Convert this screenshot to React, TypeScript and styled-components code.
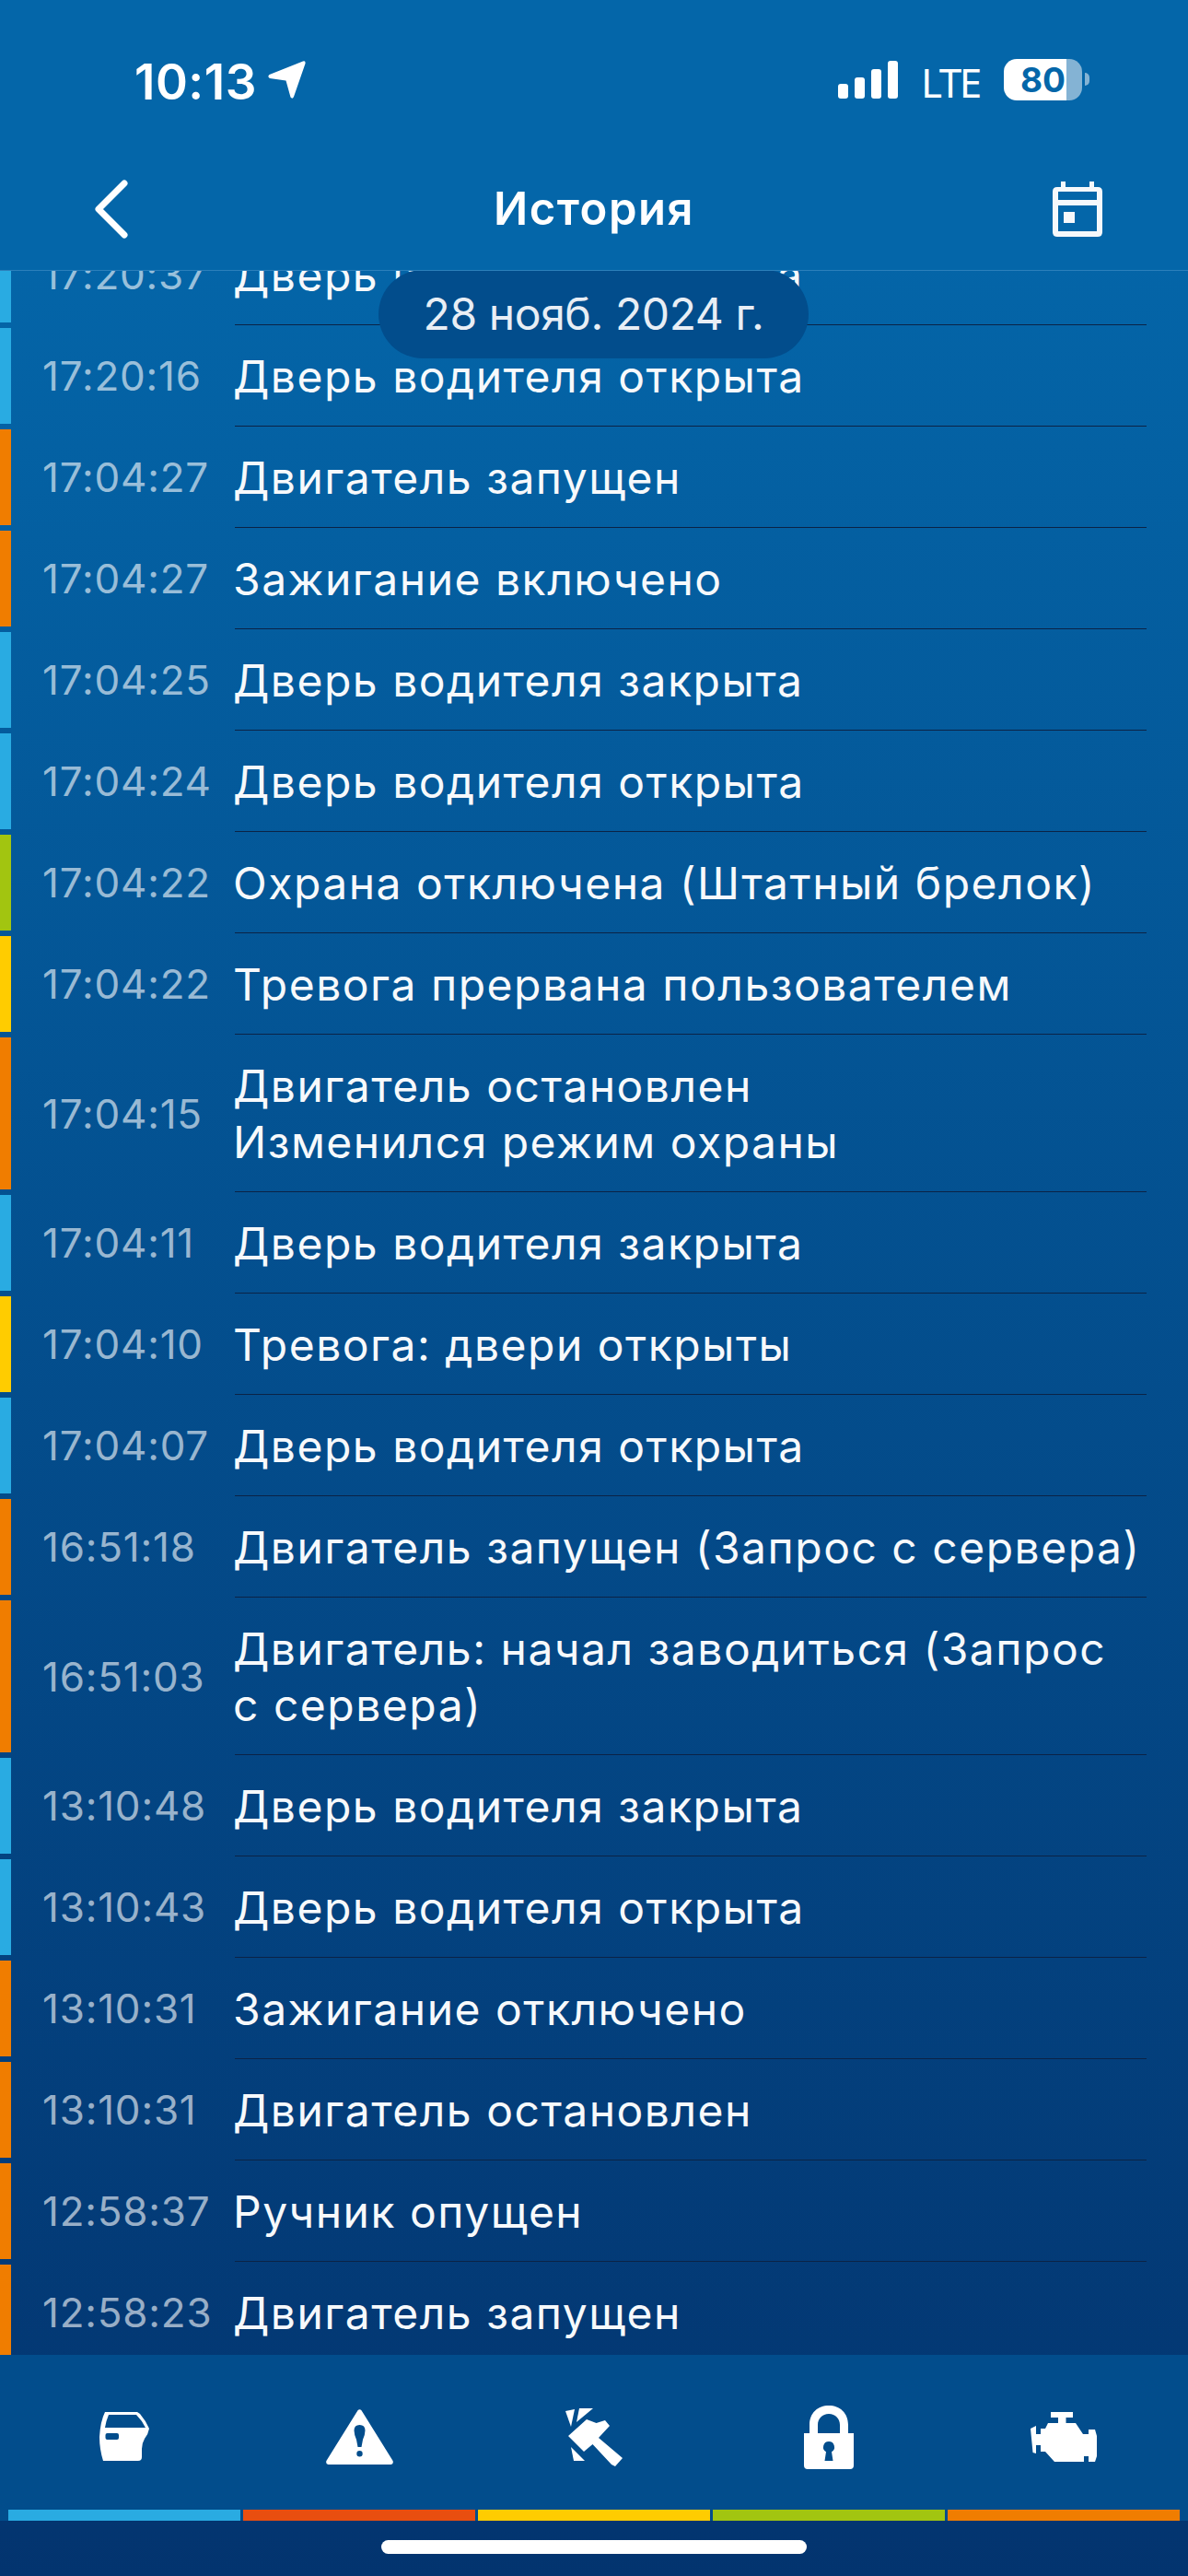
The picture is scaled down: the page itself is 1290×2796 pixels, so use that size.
import React from "react";
import styled, { createGlobalStyle } from "styled-components";

const COLORS = {
  door: "#29abe2",
  alarm: "#e94e0f",
  warn: "#ffcc00",
  guard: "#a2c510",
  engine: "#f07d00",
};

type Kind = keyof typeof COLORS;

const events: { time: string; text: string; kind: Kind }[] = [
  { time: "17:20:37", text: "Дверь водителя закрыта", kind: "door" },
  { time: "17:20:16", text: "Дверь водителя открыта", kind: "door" },
  { time: "17:04:27", text: "Двигатель запущен", kind: "engine" },
  { time: "17:04:27", text: "Зажигание включено", kind: "engine" },
  { time: "17:04:25", text: "Дверь водителя закрыта", kind: "door" },
  { time: "17:04:24", text: "Дверь водителя открыта", kind: "door" },
  { time: "17:04:22", text: "Охрана отключена (Штатный брелок)", kind: "guard" },
  { time: "17:04:22", text: "Тревога прервана пользователем", kind: "warn" },
  { time: "17:04:15", text: "Двигатель остановлен\nИзменился режим охраны", kind: "engine" },
  { time: "17:04:11", text: "Дверь водителя закрыта", kind: "door" },
  { time: "17:04:10", text: "Тревога: двери открыты", kind: "warn" },
  { time: "17:04:07", text: "Дверь водителя открыта", kind: "door" },
  { time: "16:51:18", text: "Двигатель запущен (Запрос с сервера)", kind: "engine" },
  { time: "16:51:03", text: "Двигатель: начал заводиться (Запрос\nс сервера)", kind: "engine" },
  { time: "13:10:48", text: "Дверь водителя закрыта", kind: "door" },
  { time: "13:10:43", text: "Дверь водителя открыта", kind: "door" },
  { time: "13:10:31", text: "Зажигание отключено", kind: "engine" },
  { time: "13:10:31", text: "Двигатель остановлен", kind: "engine" },
  { time: "12:58:37", text: "Ручник опущен", kind: "engine" },
  { time: "12:58:23", text: "Двигатель запущен", kind: "engine" },
];

const tabs: { kind: Kind; icon: React.ReactNode }[] = [
  {
    kind: "door",
    icon: (
      <svg width="54" height="54" viewBox="0 0 54 54" fill="#fff">
        <path
          fillRule="evenodd"
          d="M6 0H41L44 2Q50 9 54 18Q53 24 49 29Q46 34 46 40V49Q46 53 42 53H4Q0 40 0 27Q1 10 6 0ZM10 3Q7 10 6 17H50Q46 9 40 3ZM8.5 23Q6.5 23 6.5 25V28Q6.5 30 8.5 30H19Q21 30 21 28V25Q21 23 19 23Z"
        />
      </svg>
    ),
  },
  {
    kind: "alarm",
    icon: (
      <svg width="73" height="60" viewBox="0 0 73 60" fill="#fff">
        <path
          fillRule="evenodd"
          d="M34.5 1.2Q36.5 -0.6 38.5 1.2L72.6 56Q73.6 59.5 70.5 60H2.5Q-0.6 59.5 0.4 56ZM36.5 17Q30.5 17 30.5 23Q30.5 27 33 33L34.5 41H38.5L40 33Q42.5 27 42.5 23Q42.5 17 36.5 17ZM36.5 45A3.2 3.2 0 1 0 36.5 51.4A3.2 3.2 0 1 0 36.5 45Z"
        />
      </svg>
    ),
  },
  {
    kind: "warn",
    icon: (
      <svg width="63" height="63" viewBox="0 0 63 63" fill="#fff">
        <path d="M23 12L33.5 16L43 13L48 19L36 32L62 54L54 63L50 61L29.5 39L20 47L3 30Z" />
        <path d="M0 3L10 1L6 20Z" />
        <path d="M15 0H30L12 15Z" />
        <path d="M6 42L21 57H9Z" />
      </svg>
    ),
  },
  {
    kind: "guard",
    icon: (
      <svg width="54" height="69" viewBox="0 0 54 69" fill="#fff">
        <path
          fillRule="evenodd"
          d="M0 30H6V21C6 8 15 0 27 0S48 8 48 21V30H54V65Q54 69 50 69H4Q0 69 0 65ZM15 30H39V21C39 14 34 9 27 9S15 14 15 21ZM27 39A6 6 0 0 0 24 50.2L22.5 60H31.5L30 50.2A6 6 0 0 0 27 39Z"
        />
      </svg>
    ),
  },
  {
    kind: "engine",
    icon: (
      <svg width="72" height="54" viewBox="0 0 72 54" fill="#fff">
        <path d="M22 0H46V6H38.5V12H49L57 24H63V19H70L72 26V48L70 54H63V48H58V54H26L16 43H11V36H6V45L2.5 44L0 18L6 15V24H11V18H16L19 12H30V6H22Z" />
      </svg>
    ),
  },
];

const GlobalStyle = createGlobalStyle`
  html, body {
    margin: 0;
    padding: 0;
  }
`;

const Screen = styled.div`
  width: 1290px;
  height: 2796px;
  display: flex;
  flex-direction: column;
  background: linear-gradient(180deg, #0466a9 0%, #0466a9 8%, #03346f 100%);
  font-family: Inter, "Noto Sans", sans-serif;
  color: #fff;
  overflow: hidden;
`;

const Header = styled.header`
  height: 294px;
  flex: none;
  box-sizing: border-box;
  background: #0466a9;
  border-bottom: 1px solid #2c80bb;
`;

const StatusBar = styled.div`
  height: 171px;
  display: flex;
  justify-content: space-between;
  padding: 64px 107px 0 146px;
  box-sizing: border-box;
`;

const Clock = styled.div`
  display: flex;
  gap: 12px;
  height: 44px;
  align-items: center;
  font-size: 53px;
  font-weight: 600;
  letter-spacing: 0.5px;

  span {
    position: relative;
    top: 3px;
  }
`;

const StatusRight = styled.div`
  display: flex;
  align-items: flex-start;
`;

const Network = styled.span`
  width: 61px;
  margin: 3px 29px 0 25px;
  font-size: 44px;
  line-height: 44px;
  font-family: "Noto Sans", sans-serif;
  letter-spacing: -2.5px;
  white-space: nowrap;
`;

const Battery = styled.div`
  width: 85px;
  height: 45px;
  border-radius: 14px;
  overflow: hidden;
  background: linear-gradient(90deg, #fff 0, #fff 68px, #84b3d4 68px);
  color: #0466a9;
  font-size: 37px;
  font-weight: 700;
  line-height: 45px;
  text-align: center;
`;

const BatteryNub = styled.div`
  width: 5px;
  height: 14px;
  margin: 15px 0 0 3px;
  border-radius: 0 7px 7px 0;
  background: #84b3d4;
`;

const NavBar = styled.nav`
  height: 122px;
  display: flex;
  align-items: center;
  justify-content: space-between;
  padding: 0 93px 11px 103px;
  box-sizing: border-box;
`;

const Title = styled.h1`
  margin: 0 0 0 8px;
  font-size: 49px;
  font-weight: 600;
  letter-spacing: 1.5px;
`;

const Body = styled.main`
  position: relative;
  flex: 1;
  min-height: 0;
  overflow: hidden;
`;

const List = styled.ul`
  margin: -48px 0 0;
  padding: 0;
  list-style: none;
`;

const Row = styled.li`
  display: flex;
  align-items: stretch;
`;

const Bar = styled.div<{ $kind: Kind }>`
  flex: none;
  width: 12px;
  margin-bottom: 6px;
  background: ${({ $kind }) => COLORS[$kind]};
`;

const Time = styled.time`
  flex: none;
  width: 243px;
  box-sizing: border-box;
  padding: 0 0 6px 34px;
  display: flex;
  align-items: center;
  font-size: 44px;
  color: rgba(255, 255, 255, 0.6);
  letter-spacing: 0.8px;
`;

const Message = styled.div`
  flex: none;
  width: 990px;
  box-sizing: border-box;
  margin-bottom: 3px;
  padding: 22px 0 23px;
  border-bottom: 1px solid #0b2346;
  font-size: 48px;
  line-height: 61px;
  letter-spacing: 1.5px;
  white-space: pre-line;
  color: #f7f9fb;
`;

const MessageText = styled.span`
  display: block;
  margin-left: -2px;
`;

const DatePill = styled.div`
  position: absolute;
  top: -1px;
  left: 411px;
  width: 467px;
  height: 96px;
  border-radius: 48px;
  background: #024d8c;
  display: flex;
  align-items: center;
  justify-content: center;
  padding-bottom: 2px;
  box-sizing: border-box;
  font-size: 48px;
  letter-spacing: -0.4px;
  color: #e8eef5;
`;

const TabBar = styled.footer`
  flex: none;
  height: 180px;
  box-sizing: border-box;
  padding: 0 9px;
  display: grid;
  grid-template-columns: repeat(5, 1fr);
  gap: 3px;
  background: #024d8c;
`;

const Tab = styled.div<{ $kind: Kind }>`
  display: flex;
  align-items: center;
  justify-content: center;
  padding-top: 10px;
  box-sizing: border-box;
  border-bottom: 12px solid ${({ $kind }) => COLORS[$kind]};
`;

const HomeArea = styled.div`
  flex: none;
  height: 60px;
  display: flex;
  justify-content: center;
  padding-top: 21px;
  box-sizing: border-box;
`;

const HomeIndicator = styled.div`
  width: 462px;
  height: 15px;
  border-radius: 8px;
  background: #fff;
`;

export default function App() {
  return (
    <Screen>
      <GlobalStyle />
      <Header>
        <StatusBar>
          <Clock>
            <span>10:13</span>
            <svg width="41" height="41" viewBox="0 0 41 41" fill="#fff">
              <path d="M38 0.5Q41 -0.5 40.5 3L28 39Q26.5 42 24.5 39.5L19.5 21.5L2 19Q-1 17.5 1.5 15Z" />
            </svg>
          </Clock>
          <StatusRight>
            <svg width="65" height="41" viewBox="0 0 65 41" fill="#fff" style={{ marginTop: 2 }}>
              <rect x="0" y="25" width="11" height="16" rx="3" />
              <rect x="18" y="18" width="11" height="23" rx="3" />
              <rect x="36" y="9" width="11" height="32" rx="3" />
              <rect x="54" y="0" width="11" height="41" rx="3" />
            </svg>
            <Network>LTE</Network>
            <Battery>80</Battery>
            <BatteryNub />
          </StatusRight>
        </StatusBar>
        <NavBar>
          <svg width="36" height="64" viewBox="0 0 36 64" fill="none" stroke="#fff" strokeWidth="7" strokeLinecap="round" strokeLinejoin="round">
            <path d="M32 4L4 32L32 60" />
          </svg>
          <Title>История</Title>
          <svg width="54" height="60" viewBox="0 0 54 60" fill="#f6f8fb">
            <path
              fillRule="evenodd"
              d="M9 0H14V6H40V0H45V6H49Q54 6 54 11V55Q54 60 49 60H5Q0 60 0 55V11Q0 6 5 6H9ZM6 11V20H48V11ZM6 26V54H48V26ZM12 33H24V45H12Z"
            />
          </svg>
        </NavBar>
      </Header>
      <Body>
        <List>
          {events.map((event, index) => (
            <Row key={index}>
              <Bar $kind={event.kind} />
              <Time>{event.time}</Time>
              <Message>
                <MessageText>{event.text}</MessageText>
              </Message>
            </Row>
          ))}
        </List>
        <DatePill>28 нояб. 2024 г.</DatePill>
      </Body>
      <TabBar>
        {tabs.map((tab) => (
          <Tab key={tab.kind} $kind={tab.kind}>
            {tab.icon}
          </Tab>
        ))}
      </TabBar>
      <HomeArea>
        <HomeIndicator />
      </HomeArea>
    </Screen>
  );
}
